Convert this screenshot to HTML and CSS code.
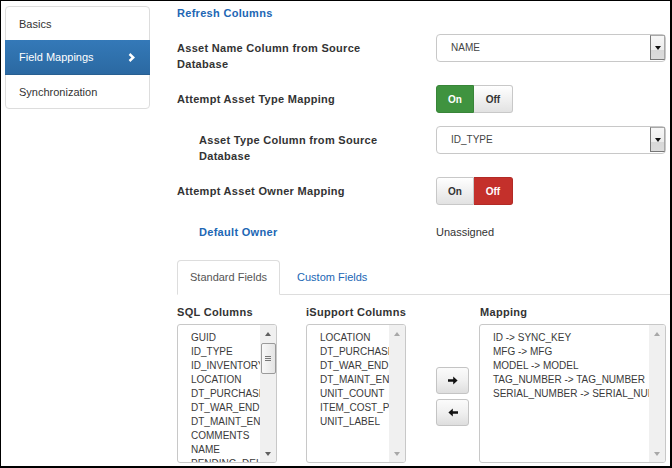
FILE: index.html
```html
<!DOCTYPE html>
<html>
<head>
<meta charset="utf-8">
<link rel="stylesheet" href="styles.css">
</head>
<body>
<div class="frame">
  <nav class="side">
    <a class="nav-item">Basics</a>
    <a class="nav-item active">Field Mappings
      <svg class="chev" width="7" height="9" viewBox="0 0 7 9"><polyline points="1.5,1 5.3,4.5 1.5,8" fill="none" stroke="#fff" stroke-width="2.4"/></svg>
    </a>
    <a class="nav-item">Synchronization</a>
  </nav>
  <main class="main">
    <div class="refresh">Refresh Columns</div>
    <div class="form">
      <div class="row">
        <div class="label">Asset Name Column from Source<br>Database</div>
        <div class="select"><span class="sel-text">NAME</span><span class="sel-arrow"><i class="tri-down"></i></span></div>
      </div>
      <div class="row">
        <div class="label">Attempt Asset Type Mapping</div>
        <div class="toggle"><span class="seg on">On</span><span class="seg plain">Off</span></div>
      </div>
      <div class="row">
        <div class="label indent">Asset Type Column from Source<br>Database</div>
        <div class="select"><span class="sel-text">ID_TYPE</span><span class="sel-arrow"><i class="tri-down"></i></span></div>
      </div>
      <div class="row">
        <div class="label">Attempt Asset Owner Mapping</div>
        <div class="toggle"><span class="seg plain">On</span><span class="seg off">Off</span></div>
      </div>
      <div class="row center">
        <div class="label indent link">Default Owner</div>
        <div class="value">Unassigned</div>
      </div>
    </div>
    <div class="tabs">
      <span class="tab active">Standard Fields</span>
      <span class="tab link-tab">Custom Fields</span>
    </div>
    <div class="cols">
      <div class="col col-sql">
        <div class="col-h">SQL Columns</div>
        <div class="list">
          <div class="items">GUID<br>ID_TYPE<br>ID_INVENTORY<br>LOCATION<br>DT_PURCHASED<br>DT_WAR_END<br>DT_MAINT_END<br>COMMENTS<br>NAME<br>PENDING_DELETE</div>
          <div class="sb">
            <span class="sb-btn"><i class="tri-up"></i></span>
            <span class="sb-thumb"><i></i><i></i><i></i></span>
            <span class="sb-fill"></span>
            <span class="sb-btn"><i class="tri-dn"></i></span>
          </div>
        </div>
      </div>
      <div class="col col-isup">
        <div class="col-h">iSupport Columns</div>
        <div class="list">
          <div class="items">LOCATION<br>DT_PURCHASED<br>DT_WAR_END<br>DT_MAINT_END<br>UNIT_COUNT<br>ITEM_COST_PRICE<br>UNIT_LABEL</div>
          <div class="sb disabled">
            <span class="sb-btn"><i class="tri-up"></i></span>
            <span class="sb-fill"></span>
            <span class="sb-btn"><i class="tri-dn"></i></span>
          </div>
        </div>
      </div>
      <div class="col col-btns">
        <span class="mbtn"><svg width="10" height="9" viewBox="0 0 10 9"><polygon points="0,3.3 5.2,3.3 5.2,0.6 9.6,4.5 5.2,8.4 5.2,5.7 0,5.7" fill="#111"/></svg></span>
        <span class="mbtn"><svg width="10" height="9" viewBox="0 0 10 9"><polygon points="10,3.3 4.8,3.3 4.8,0.6 0.4,4.5 4.8,8.4 4.8,5.7 10,5.7" fill="#111"/></svg></span>
      </div>
      <div class="col col-map">
        <div class="col-h map-h">Mapping</div>
        <div class="list">
          <div class="items">ID -&gt; SYNC_KEY<br>MFG -&gt; MFG<br>MODEL -&gt; MODEL<br>TAG_NUMBER -&gt; TAG_NUMBER<br>SERIAL_NUMBER -&gt; SERIAL_NUMBER</div>
          <div class="sb disabled">
            <span class="sb-btn"><i class="tri-up"></i></span>
            <span class="sb-fill"></span>
            <span class="sb-btn"><i class="tri-dn"></i></span>
          </div>
        </div>
      </div>
    </div>
  </main>
</div>
</body>
</html>
```
FILE: styles.css
```css
* { box-sizing: border-box; }
html, body { margin: 0; padding: 0; }
body {
  font-family: "Liberation Sans", Arial, sans-serif;
  font-size: 11px;
  color: #333;
  background: #fff;
}
.frame {
  width: 672px;
  height: 468px;
  border-style: solid;
  border-color: #000;
  border-width: 1px 2px 2px 1px;
  padding: 5px 0 0 4px;
  display: flex;
  align-items: flex-start;
  overflow: hidden;
}

/* side nav */
.side {
  width: 145px;
  flex-shrink: 0;
  border: 1px solid #ddd;
  border-radius: 4px;
  display: flex;
  flex-direction: column;
}
.nav-item {
  height: 34px;
  display: flex;
  align-items: center;
  padding-left: 13px;
  border-bottom: 1px solid #ddd;
  color: #333;
}
.nav-item:last-child { border-bottom: 0; height: 33px; }
.nav-item.active {
  margin: -1px -1px 0;
  height: 35px;
  padding: 0 15px 0 14px;
  color: #fff;
  background: linear-gradient(#3479b8, #2b69a2);
  border-bottom: 1px solid #285f91;
}
.chev { margin-left: auto; }

/* main */
.main {
  margin-left: 27px;
  width: 493px;
  flex-shrink: 0;
}
.refresh {
  color: #2166b4;
  font-weight: bold;
  letter-spacing: 0.3px;
  line-height: 14px;
  margin-bottom: 14px;
}
.form {
  display: flex;
  flex-direction: column;
  gap: 13px;
}
.row {
  display: grid;
  grid-template-columns: 259px 230px;
  min-height: 28px;
  align-items: start;
}
.row.center { align-items: center; }
.label {
  font-weight: bold;
  letter-spacing: 0.3px;
  line-height: 16px;
  padding-top: 6px;
  color: #333;
}
.row.center .label { padding-top: 0; }
.label.indent { padding-left: 22px; }
.label.link { color: #2166b4; }
.value { color: #333; }

.select {
  height: 28px;
  border: 1px solid #c8c8c8;
  border-radius: 4px;
  display: flex;
  align-items: flex-start;
  padding-left: 14px;
  font-size: 10px;
  color: #444;
}
.sel-text { line-height: 26px; }
.sel-arrow {
  margin-left: auto;
  width: 15px;
  height: 25px;
  border: 1px solid #777;
  border-top-color: #a8a8a8;
  border-right-color: #a8a8a8;
  background: linear-gradient(#f7f7f7, #ececec 62%, #d8d8d8 62%, #dcdcdc);
  display: flex;
  justify-content: center;
  padding-top: 10px;
}
.tri-down {
  width: 0;
  height: 0;
  border-left: 3.5px solid transparent;
  border-right: 3.5px solid transparent;
  border-top: 4px solid #111;
}

.toggle {
  display: flex;
  width: 77px;
  height: 28px;
}
.seg {
  display: flex;
  align-items: center;
  justify-content: center;
  font-size: 10px;
  font-weight: bold;
  border: 1px solid #c8c8c8;
}
.seg:first-child { width: 38px; border-radius: 3px 0 0 3px; }
.seg:last-child { width: 39px; border-left: 0; border-radius: 0 3px 3px 0; }
.seg.plain {
  background: linear-gradient(#ffffff, #e2e2e2);
  color: #333;
}
.seg.on {
  background: #3f933f;
  border-color: #388538;
  color: #fff;
}
.seg.off {
  background: #c4302b;
  border-color: #b22a26;
  color: #fff;
}

/* tabs */
.tabs {
  display: flex;
  height: 35px;
  margin-top: 14px;
  border-bottom: 1px solid #ddd;
}
.tab {
  height: 35px;
  margin-bottom: -1px;
  display: flex;
  align-items: center;
  padding: 0 12px 1px;
  border: 1px solid transparent;
  border-radius: 4px 4px 0 0;
}
.tab.active {
  border-color: #ddd #ddd transparent;
  background: #fff;
  color: #555;
}
.tab.link-tab {
  color: #2166b4;
  padding: 0 16px 1px;
}

/* columns */
.cols {
  display: flex;
  margin-top: 10px;
}
.col { display: flex; flex-direction: column; flex-shrink: 0; }
.col-sql { width: 100px; margin-right: 29px; }
.col-isup { width: 100px; margin-right: 30px; }
.col-btns { width: 33px; margin-right: 10px; padding-top: 62px; gap: 5px; }
.col-map { width: 187px; }
.col-h {
  font-weight: bold;
  letter-spacing: 0.3px;
  line-height: 14px;
  margin-bottom: 5px;
  color: #333;
  white-space: nowrap;
}
.map-h { padding-left: 1px; }

.list {
  height: 139px;
  border: 1px solid #c8c8c8;
  border-radius: 3px;
  display: flex;
  overflow: hidden;
  font-size: 10px;
  color: #3a3a3a;
}
.items {
  flex: 1;
  min-width: 0;
  padding: 6px 0 0 13px;
  line-height: 14px;
  white-space: nowrap;
  overflow: hidden;
}
.sb {
  width: 16px;
  flex-shrink: 0;
  background: #f0f0f0;
  display: flex;
  flex-direction: column;
  align-items: center;
}
.sb-btn {
  height: 17px;
  width: 16px;
  display: flex;
  align-items: center;
  justify-content: center;
}
.sb-fill { flex: 1; }
.tri-up, .tri-dn {
  width: 0;
  height: 0;
  border-left: 3.5px solid transparent;
  border-right: 3.5px solid transparent;
}
.tri-up { border-bottom: 4px solid #606060; }
.tri-dn { border-top: 4px solid #606060; }
.sb.disabled .tri-up { border-bottom-color: #a8a8a8; }
.sb.disabled .tri-dn { border-top-color: #a8a8a8; }
.sb-thumb {
  margin-top: 1px;
  width: 15px;
  height: 31px;
  border: 1px solid #9a9a9a;
  border-radius: 2px;
  background: linear-gradient(90deg, #f8f8f8, #e4e4e4);
  display: flex;
  flex-direction: column;
  align-items: center;
  justify-content: center;
  gap: 1px;
}
.sb-thumb i {
  display: block;
  width: 6px;
  height: 1px;
  background: #777;
}

.mbtn {
  width: 33px;
  height: 27px;
  border: 1px solid #c4c4c4;
  border-radius: 3px;
  background: linear-gradient(#fbfbfb, #f0f0f0 50%, #dedede);
  display: flex;
  align-items: center;
  justify-content: center;
}
```
